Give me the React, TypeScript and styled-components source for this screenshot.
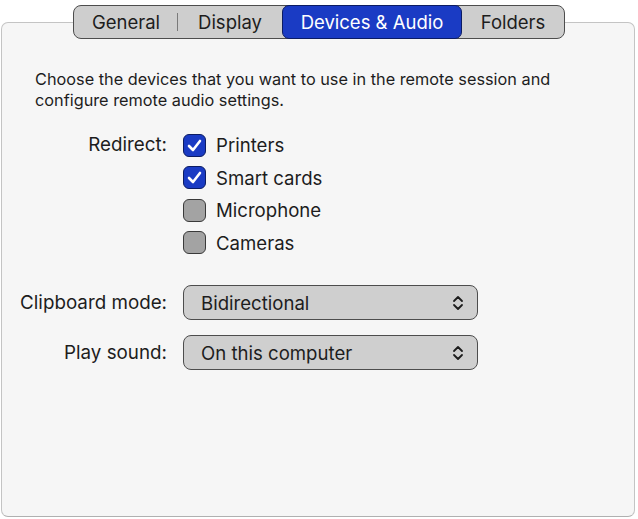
import React from "react";
import styled, { createGlobalStyle } from "styled-components";

const Global = createGlobalStyle`
  html, body { margin: 0; padding: 0; background: #ffffff; }
  body { font-family: Inter, "Liberation Sans", sans-serif; color: #1d1d1d; -webkit-font-smoothing: antialiased; }
`;

const Page = styled.div`
  display: flex;
  flex-direction: column;
  align-items: center;
  width: 638px;
  height: 519px;
  padding-top: 5px;
  box-sizing: border-box;
`;

const TabBar = styled.div`
  position: relative;
  z-index: 2;
  display: flex;
  height: 34px;
  box-sizing: border-box;
  border: 1px solid #4d4d4d;
  border-radius: 8px;
  background: #cecece;
  margin-bottom: -17px;
`;

const Tab = styled.div<{ $active?: boolean; $divider?: boolean; $w: number }>`
  position: relative;
  width: ${(p) => p.$w}px;
  display: flex;
  align-items: center;
  justify-content: center;
  font-size: 18.5px;
  color: ${(p) => (p.$active ? "#ffffff" : "#1d1d1d")};
  background: ${(p) => (p.$active ? "#1a3bc4" : "transparent")};
  border: ${(p) => (p.$active ? "1px solid #0c1c63" : "none")};
  border-radius: 7px;
  margin: ${(p) => (p.$active ? "-1px 0" : "0")};
  box-sizing: border-box;
  &::after {
    content: "";
    display: ${(p) => (p.$divider ? "block" : "none")};
    position: absolute;
    right: 0;
    top: 7px;
    bottom: 7px;
    width: 1px;
    background: #7a7a7a;
  }
`;

const Panel = styled.div`
  align-self: flex-start;
  margin-left: 1px;
  width: 634px;
  height: 495px;
  box-sizing: border-box;
  background: #f6f6f6;
  border: 1px solid #c4c4c4;
  border-bottom-color: #b0b0b0;
  border-radius: 7px;
  padding-top: 46px;
  display: flex;
  flex-direction: column;
`;

const Description = styled.p`
  margin: 0 0 0 33px;
  font-size: 16.3px;
  line-height: 21px;
  width: 580px;
`;

const Form = styled.div`
  display: grid;
  grid-template-columns: 165px 1fr;
  column-gap: 16px;
  margin-top: 18px;
`;

const Label = styled.div<{ $top?: number }>`
  text-align: right;
  font-size: 18.8px;
  padding-top: ${(p) => p.$top ?? 0}px;
  align-self: start;
`;

const CheckList = styled.div`
  display: flex;
  flex-direction: column;
`;

const CheckRow = styled.div`
  display: flex;
  align-items: center;
  height: 32.5px;
  gap: 10px;
  font-size: 18.6px;
`;

const Box = styled.div<{ $checked?: boolean }>`
  width: 23px;
  height: 23px;
  box-sizing: border-box;
  border-radius: 6px;
  border: 1.5px solid ${(p) => (p.$checked ? "#0c1c63" : "#3a3a3a")};
  background: ${(p) => (p.$checked ? "#1a3bc4" : "#a3a3a3")};
  display: flex;
  align-items: center;
  justify-content: center;
`;

const SelectBox = styled.div<{ $mt: number }>`
  margin-top: ${(p) => p.$mt}px;
  width: 295px;
  height: 35px;
  box-sizing: border-box;
  border: 1px solid #4d4d4d;
  border-radius: 8px;
  background: #cfcfcf;
  display: flex;
  align-items: center;
  justify-content: space-between;
  padding: 0 13px 0 17px;
  font-size: 18.6px;
`;

const FieldLabel = styled.div<{ $mt: number }>`
  margin-top: ${(p) => p.$mt}px;
  display: flex;
  align-items: center;
  justify-content: flex-end;
  font-size: 18.8px;
`;

const Check = () => (
  <svg width="15" height="13" viewBox="0 0 15 13">
    <path d="M2 7 L6 11 L13 2" fill="none" stroke="#fff" strokeWidth="2.6" strokeLinecap="round" strokeLinejoin="round" />
  </svg>
);

const Chevrons = () => (
  <svg width="12" height="16" viewBox="0 0 12 16">
    <path d="M2 6 L6 2 L10 6 M2 10 L6 14 L10 10" fill="none" stroke="#1d1d1d" strokeWidth="1.8" strokeLinecap="round" strokeLinejoin="round" />
  </svg>
);

const items = [
  { label: "Printers", checked: true },
  { label: "Smart cards", checked: true },
  { label: "Microphone", checked: false },
  { label: "Cameras", checked: false },
];

export default function App() {
  return (
    <>
      <Global />
      <Page>
        <TabBar>
          <Tab $w={104} $divider>General</Tab>
          <Tab $w={104}>Display</Tab>
          <Tab $w={180} $active>Devices &amp; Audio</Tab>
          <Tab $w={102}>Folders</Tab>
        </TabBar>
        <Panel>
          <Description>
            Choose the devices that you want to use in the remote session and configure remote audio settings.
          </Description>
          <Form>
            <Label $top={4}>Redirect:</Label>
            <CheckList>
              {items.map((it) => (
                <CheckRow key={it.label}>
                  <Box $checked={it.checked}>{it.checked && <Check />}</Box>
                  {it.label}
                </CheckRow>
              ))}
            </CheckList>
            <FieldLabel $mt={26}>Clipboard mode:</FieldLabel>
            <SelectBox $mt={26}>
              Bidirectional
              <Chevrons />
            </SelectBox>
            <FieldLabel $mt={15}>Play sound:</FieldLabel>
            <SelectBox $mt={15}>
              On this computer
              <Chevrons />
            </SelectBox>
          </Form>
        </Panel>
      </Page>
    </>
  );
}
